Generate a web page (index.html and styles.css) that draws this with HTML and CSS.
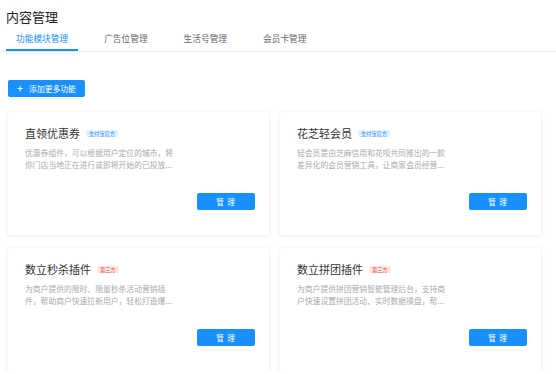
FILE: index.html
```html
<!DOCTYPE html>
<html lang="zh-CN">
<head>
    <meta charset="UTF-8">
    <meta name="viewport" content="width=device-width, initial-scale=1.0">
    <title>内容管理</title>
    <link rel="stylesheet" href="styles.css">
</head>
<body>
    <header class="page-header">
        <h1>内容管理</h1>
        <nav class="tabs">
            <div class="tab active">功能模块管理</div>
            <div class="tab">广告位管理</div>
            <div class="tab">生活号管理</div>
            <div class="tab">会员卡管理</div>
        </nav>
    </header>

    <main class="content">
        <button class="add-btn"><span class="plus">+</span>添加更多功能</button>

        <div class="card-grid">
            <div class="card">
                <div class="card-title">直领优惠券<span class="tag tag-blue">支付宝官方</span></div>
                <p class="card-desc">优惠券组件，可以根据用户定位的城市，将你门店当地正在进行或即将开始的已投放...</p>
                <button class="manage-btn">管 理</button>
            </div>
            <div class="card">
                <div class="card-title">花芝轻会员<span class="tag tag-blue">支付宝官方</span></div>
                <p class="card-desc">轻会员是由芝麻信用和花呗共同推出的一款差异化的会员营销工具，让商家会员经营...</p>
                <button class="manage-btn">管 理</button>
            </div>
            <div class="card">
                <div class="card-title">数立秒杀插件<span class="tag tag-red">第三方</span></div>
                <p class="card-desc">为商户提供的限时、限量秒杀活动营销插件，帮助商户快速拉新用户，轻松打造爆...</p>
                <button class="manage-btn">管 理</button>
            </div>
            <div class="card">
                <div class="card-title">数立拼团插件<span class="tag tag-red">第三方</span></div>
                <p class="card-desc">为商户提供拼团营销智能管理后台，支持商户快速设置拼团活动、实时数据操盘，帮...</p>
                <button class="manage-btn">管 理</button>
            </div>
        </div>
    </main>
</body>
</html>
```

FILE: styles.css
```css
body {
    margin: 0;
    background: #fff;
    color: #333;
    font-family: "Noto Sans CJK SC", "Noto Sans", sans-serif;
}
.page-header h1 {
    margin: 0;
    padding: 8px 6px 0;
    font-size: 13px;
    line-height: 17px;
    font-weight: normal;
    color: #222;
}
.tabs {
    display: flex;
    gap: 16px;
    margin-top: 4px;
    padding-left: 6px;
    border-bottom: 1px solid #eee;
}
.tab {
    padding: 0 10px;
    font-size: 8.7px;
    line-height: 20px;
    color: #666;
    border-bottom: 2px solid transparent;
}
.tab.active {
    color: #1890ff;
    border-bottom-color: #1890ff;
}
.content {
    padding: 28px 15px 0 8px;
}
.add-btn {
    display: flex;
    align-items: center;
    width: 77px;
    height: 17px;
    padding: 0 0 0 9px;
    border: none;
    border-radius: 2px;
    background: #1890ff;
    color: #fff;
    font-family: inherit;
    font-size: 7.8px;
}
.plus {
    font-size: 11px;
    line-height: 1;
    margin-right: 6px;
}
.card-grid {
    display: grid;
    grid-template-columns: 261px 261px;
    grid-auto-rows: 123px;
    column-gap: 11px;
    row-gap: 13px;
    margin-top: 15px;
}
.card {
    display: flex;
    flex-direction: column;
    padding: 14px 14px 25px 17px;
    background: #fff;
    border-radius: 3px;
    box-shadow: 0 1px 5px rgba(0, 0, 0, 0.09);
}
.card-title {
    display: flex;
    align-items: center;
    font-size: 11px;
    line-height: 14px;
    color: #333;
}
.tag {
    margin-left: 6px;
    padding: 0 3px;
    font-size: 5.2px;
    line-height: 7px;
    border-radius: 1px;
}
.tag-blue {
    background: #e3f1ff;
    color: #1890ff;
}
.tag-red {
    background: #fde5e3;
    color: #f04134;
}
.card-desc {
    width: 152px;
    margin: 7px 0 0;
    font-size: 7.8px;
    line-height: 12px;
    color: #aaa;
}
.manage-btn {
    align-self: flex-end;
    margin-top: auto;
    width: 58px;
    height: 17px;
    border: none;
    border-radius: 2px;
    background: #1890ff;
    color: #fff;
    font-family: inherit;
    font-size: 7.5px;
    letter-spacing: 1px;
}
```
